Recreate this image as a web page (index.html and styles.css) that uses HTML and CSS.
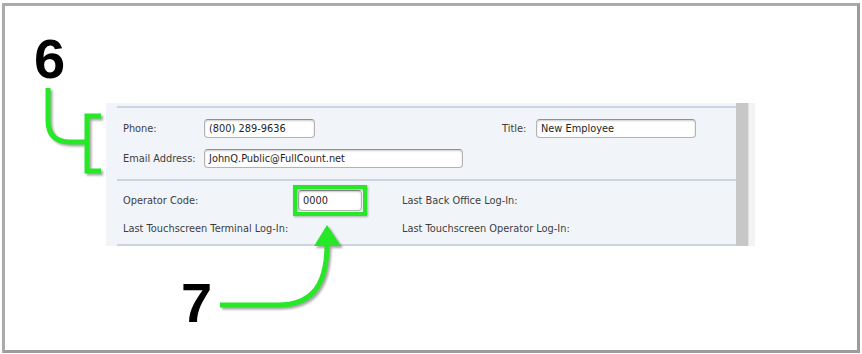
FILE: index.html
```html
<!DOCTYPE html>
<html>
<head>
<meta charset="utf-8">
<link rel="stylesheet" href="styles.css">
</head>
<body>
<div class="frame">
  <div class="panel">
    <div class="content">
      <div class="section sec1">
        <div class="row">
          <span class="lbl w81">Phone:</span>
          <span class="field f-phone">(800) 289-9636</span>
          <span class="lbl title-lbl">Title:</span>
          <span class="field f-title">New Employee</span>
        </div>
        <div class="row">
          <span class="lbl w81">Email Address:</span>
          <span class="field f-email">JohnQ.Public@FullCount.net</span>
        </div>
      </div>
      <div class="section sec2">
        <span class="lbl">Operator Code:</span>
        <span class="field f-code">0000</span>
        <span class="lbl">Last Back Office Log-In:</span>
        <span class="lbl">Last Touchscreen Terminal Log-In:</span>
        <span></span>
        <span class="lbl">Last Touchscreen Operator Log-In:</span>
      </div>
    </div>
    <div class="scrollbar"></div>
    <div class="strip"></div>
  </div>
</div>
<div class="num num6">6</div>
<div class="num num7">7</div>
<svg class="annot" width="862" height="354" viewBox="0 0 862 354">
  <g fill="none" stroke="#26e826" stroke-width="5" stroke-linejoin="miter" stroke-linecap="butt">
    <path d="M48 88 V120 Q48 142 70 142 H87"/>
    <path d="M101 116 H87 V171 H101"/>
    <path d="M220 305 H278 C308 305 327 290 327 244"/>
  </g>
  <polygon points="327,225 314,246 341,246" fill="#26e826"/>
</svg>
</body>
</html>
```
FILE: styles.css
```css
html, body { margin: 0; padding: 0; background: #fff; }
body { width: 862px; height: 354px; overflow: hidden; position: relative; font-family: "DejaVu Sans", Verdana, sans-serif; }

.frame {
  margin: 3px 0 0 2px;
  width: 751px;
  height: 247px;
  border: 3px solid #ababab;
  border-right-color: #9c9c9c;
  border-bottom-color: #9c9c9c;
  padding: 97px 0 0 101px;
  box-sizing: content-box;
}

.panel { display: flex; width: 649px; height: 143px; }
.content { width: 631px; background: #f1f5f9; padding: 3px 0 0 11px; box-sizing: border-box; }
.scrollbar { width: 12px; background: #c7c7c7; }
.strip { width: 6px; background: #f3f3f3; border-left: 1px solid #e2e2e2; }

.section { padding-left: 6px; }
.sec1 { border-top: 2px solid #c9d5e1; padding-top: 11px; padding-bottom: 11px; display: flex; flex-direction: column; gap: 11px; }
.sec2 { border-top: 2px solid #c9d5e1; border-bottom: 2px solid #c9d5e1; padding-top: 9px; padding-bottom: 8px;
  display: grid; grid-template-columns: 175px 104px auto; grid-template-rows: 21px 16px; row-gap: 9px; align-items: center; }

.row { display: flex; align-items: center; height: 19px; }
.lbl { font-size: 9.8px; color: #3d3d3d; white-space: nowrap; }
.w81 { width: 81px; flex: none; }
.title-lbl { margin-left: 187px; width: 34px; }

.field {
  display: block; box-sizing: border-box; height: 19px; background: #fff;
  border: 1px solid #b3b3b3; border-top-color: #8f8f8f; border-radius: 4px;
  box-shadow: inset 0 1px 2px rgba(0,0,0,0.2);
  font-size: 9.8px; color: #1e1e1e; line-height: 17px; padding-left: 4px; white-space: nowrap;
}
.f-phone { width: 111px; }
.f-title { width: 160px; }
.f-email { width: 259px; }
.f-code { width: 64px; height: 21px; line-height: 19px; position: relative; }
.f-code::after {
  content: ""; position: absolute; left: -6px; top: -6px; right: -6px; bottom: -6px;
  border: 4px solid #26e826;
  filter: drop-shadow(1px 1px 1px rgba(0,0,0,0.3));
}

.num { position: absolute; font-family: "Liberation Sans", Arial, sans-serif; font-weight: bold; font-size: 56px; line-height: 56px; color: #000; }
.num6 { left: 34px; top: 31px; }
.num7 { left: 181px; top: 275px; }

.annot { position: absolute; left: 0; top: 0; pointer-events: none; filter: drop-shadow(2px 2px 1px rgba(0,0,0,0.35)); }
```
